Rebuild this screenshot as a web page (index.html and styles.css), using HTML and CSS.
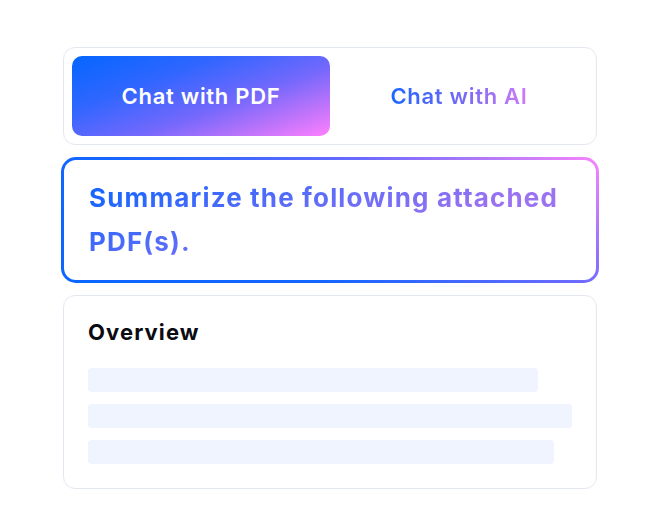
FILE: index.html
```html
<!DOCTYPE html>
<html>
<head>
<meta charset="utf-8">
<link rel="stylesheet" href="styles.css">
</head>
<body>
<div class="wrap">
  <div class="tabs">
    <div class="tab active">Chat with PDF</div>
    <div class="tab"><span class="grad-text">Chat with AI</span></div>
  </div>
  <div class="prompt">
    <div class="prompt-inner">
      <p class="prompt-text">Summarize the following attached PDF(s).</p>
    </div>
  </div>
  <div class="overview">
    <h2 class="overview-title">Overview</h2>
    <div class="bars">
      <div class="bar" style="width: 450px"></div>
      <div class="bar" style="width: 484px"></div>
      <div class="bar" style="width: 466px"></div>
    </div>
  </div>
</div>
</body>
</html>
```

FILE: styles.css
```css
* { box-sizing: border-box; }
html, body { margin: 0; padding: 0; background: #ffffff; }
body {
  font-family: Inter, "Noto Sans", "Liberation Sans", sans-serif;
  width: 660px;
  height: 508px;
}
.wrap {
  width: 534px;
  margin: 0 auto;
  padding-top: 47px;
  display: flex;
  flex-direction: column;
  gap: 12px;
}
.tabs {
  border: 1px solid #e3e7f0;
  border-radius: 12px;
  padding: 8px;
  display: grid;
  grid-template-columns: 258px 1fr;
  height: 98px;
}
.tab {
  border-radius: 10px;
  display: flex;
  align-items: center;
  justify-content: center;
  font-size: 22px;
  font-weight: 600;
  letter-spacing: 0.7px;
}
.tab.active {
  background: linear-gradient(160deg, #0466ff 0%, #2e66ff 30%, #7468fc 60%, #c074fa 82%, #ff80ff 100%);
  color: #ffffff;
}
.grad-text {
  background: linear-gradient(90deg, #1a66ff 0%, #7a6af5 55%, #d07af8 100%);
  -webkit-background-clip: text;
  background-clip: text;
  color: transparent;
}
.prompt {
  margin: 0 -2px;
  padding: 3px;
  border-radius: 15px;
  background: linear-gradient(30deg, #0a66ff 0%, #1466ff 35%, #6a6aff 68%, #b47af8 85%, #f884ff 100%);
}
.prompt-inner {
  background: #ffffff;
  border-radius: 12px;
  padding: 16px 25px 16px 25px;
}
.prompt-text {
  margin: 0;
  font-size: 26px;
  line-height: 44px;
  font-weight: 700;
  letter-spacing: 1.15px;
  background: linear-gradient(160deg, #1666ff 8%, #9a72f2 66%, #a074f2 100%);
  -webkit-background-clip: text;
  background-clip: text;
  color: transparent;
}
.overview {
  border: 1px solid #e3e7f0;
  border-radius: 12px;
  padding: 20px 24px 24px 24px;
  height: 194px;
}
.overview-title {
  margin: 0;
  font-size: 22px;
  line-height: 32px;
  font-weight: 700;
  letter-spacing: 1.1px;
  color: #0b0b12;
}
.bars {
  margin-top: 20px;
  display: flex;
  flex-direction: column;
  gap: 12px;
}
.bar {
  height: 24px;
  border-radius: 4px;
  background: #f0f4fe;
}
```
